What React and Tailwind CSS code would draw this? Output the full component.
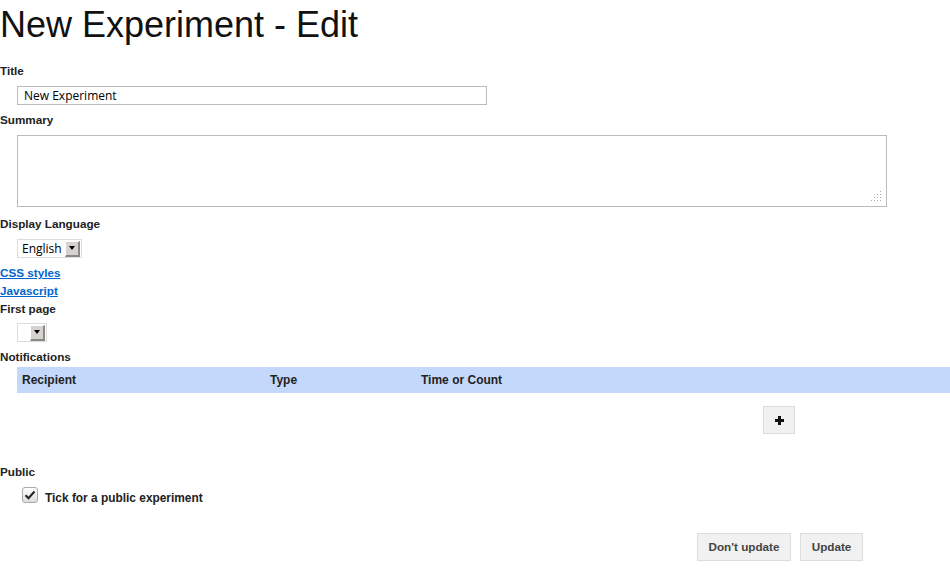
export default function App() {
  const label = "block text-[11.7px] font-bold leading-[13px] text-[#222]";
  const arrowBox = (
    <span className="flex h-[16px] w-[15px] items-center justify-center border-r-2 border-b-2 border-r-[#888] border-b-[#888] border-t border-l border-t-white border-l-white bg-[#d6d3ce]">
      <span className="block h-0 w-0 border-x-[3px] border-t-[4px] border-x-transparent border-t-black" />
    </span>
  );

  return (
    <div className="h-[570px] w-[950px] overflow-hidden bg-white font-['Liberation_Sans',Arial,sans-serif] text-[#111]">
      <h1 className="pt-[4px] text-[36px] font-normal leading-[42px]">New Experiment - Edit</h1>

      <div className="mt-[18px]">
        <span className={label}>Title</span>
        <div className="mt-[9px] pl-[17px]">
          <div className="flex h-[19px] w-[470px] items-center border border-[#bbb] pl-[6px] font-['Open_Sans',sans-serif] text-[12px] text-black">
            New Experiment
          </div>
        </div>
      </div>

      <div className="mt-[8px]">
        <span className={label}>Summary</span>
        <div className="mt-[9px] pl-[17px]">
          <div className="relative h-[72px] w-[870px] border border-[#bbb]">
            <svg className="absolute right-[4px] bottom-[4px]" width="12" height="12" viewBox="0 0 12 12">
              {[[10, 2], [10, 5], [7, 5], [10, 8], [7, 8], [4, 8], [10, 11], [7, 11], [4, 11], [1, 11]].map(([x, y], i) => (
                <rect key={i} x={x} y={y - 1} width="1" height="1" fill="#aaa" />
              ))}
            </svg>
          </div>
        </div>
      </div>

      <div className="mt-[10px]">
        <span className={label}>Display Language</span>
        <div className="mt-[9px] pl-[17px]">
          <div className="flex h-[19px] w-[65px] items-center justify-between border border-[#ddd] pl-[4px] pr-[1px] font-['Open_Sans',sans-serif] text-[12px] text-black">
            English
            {arrowBox}
          </div>
        </div>
      </div>

      <div className="mt-[8px] flex flex-col gap-[5px]">
        <a href="#" className="text-[11.7px] font-bold leading-[13px] text-[#0066cc] underline">CSS styles</a>
        <a href="#" className="text-[11.7px] font-bold leading-[13px] text-[#0066cc] underline">Javascript</a>
        <span className={label}>First page</span>
      </div>
      <div className="mt-[8px] pl-[17px]">
        <div className="flex h-[19px] w-[30px] items-center justify-end border border-[#ddd] pr-[1px]">
          {arrowBox}
        </div>
      </div>

      <div className="mt-[8px]">
        <span className={label}>Notifications</span>
        <div className="mt-[4px] pl-[17px]">
          <div className="flex h-[26px] items-center bg-[#c4d8fc] text-[12px] font-bold text-[#222]">
            <span className="w-[253px] pl-[5px]">Recipient</span>
            <span className="w-[151px]">Type</span>
            <span>Time or Count</span>
          </div>
          <div className="mt-[13px] pl-[746px]">
            <button className="flex h-[28px] w-[32px] items-center justify-center border border-[#ddd] bg-[#f1f1f1]">
              <svg width="9" height="9" viewBox="0 0 9 9">
                <path d="M3 0h3v3h3v3H6v3H3V6H0V3h3z" fill="#111" />
              </svg>
            </button>
          </div>
        </div>
      </div>

      <div className="mt-[31px]">
        <span className={label}>Public</span>
        <div className="mt-[4px] flex items-center pl-[22px]">
          <span className="flex h-[16px] w-[16px] items-center justify-center rounded-[3px] border border-[#aaa] bg-gradient-to-b from-white to-[#ddd]">
            <svg width="12" height="10" viewBox="0 0 12 10">
              <path d="M1.5 5.2l3 3L10.5 1.5" fill="none" stroke="#222" strokeWidth="2" />
            </svg>
          </span>
          <span className="ml-[7px] pt-[8px] text-[11.9px] font-bold text-[#222]">Tick for a public experiment</span>
        </div>
      </div>

      <div className="mt-[25px] flex gap-[9px] pl-[697px]">
        <button className="h-[28px] w-[94px] border border-[#ddd] bg-[#f1f1f1] text-[11.7px] font-bold text-[#444]">Don't update</button>
        <button className="h-[28px] w-[63px] border border-[#ddd] bg-[#f1f1f1] text-[11.7px] font-bold text-[#444]">Update</button>
      </div>
    </div>
  );
}
